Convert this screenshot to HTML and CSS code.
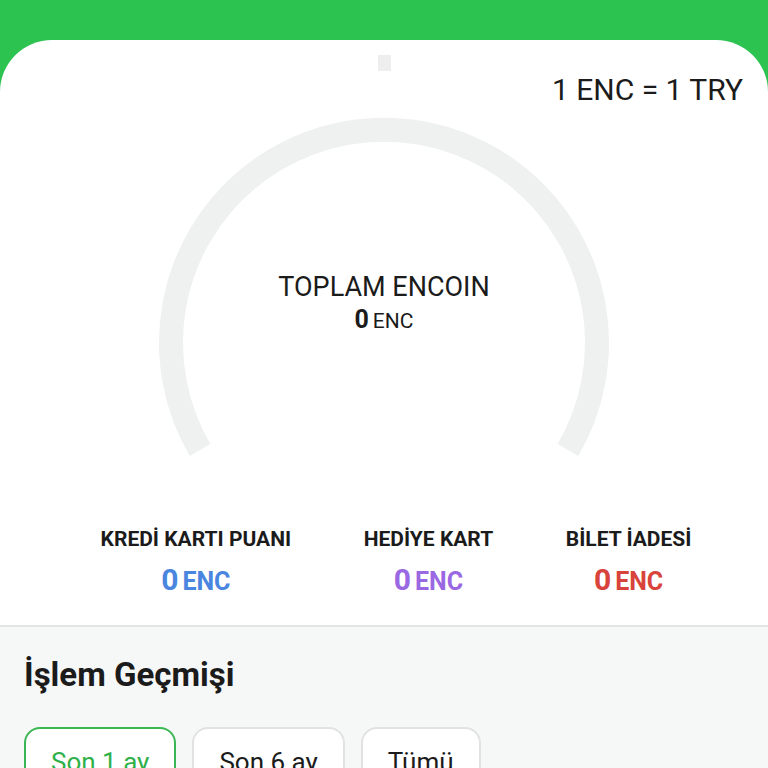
FILE: index.html
```html
<!DOCTYPE html>
<html lang="tr">
<head>
<meta charset="utf-8">
<link rel="stylesheet" href="styles.css">
</head>
<body>
<div class="page">
  <div class="card">
    <div class="handle"></div>
    <div class="rate">1 ENC = 1 TRY</div>
    <div class="gauge">
      <svg class="arc" width="460" height="360" viewBox="0 0 460 360">
        <path d="M 46 335 A 213 213 0 1 1 414 335" fill="none" stroke="#eff1f1" stroke-width="24" stroke-linecap="butt"/>
      </svg>
      <div class="total">
        <div class="total-label">TOPLAM ENCOIN</div>
        <div class="total-value"><span class="num">0</span> <span class="unit">ENC</span></div>
      </div>
    </div>
    <div class="stats">
      <div class="stat">
        <div class="stat-label">KREDİ KARTI PUANI</div>
        <div class="stat-value blue"><span class="num">0</span> <span class="unit">ENC</span></div>
      </div>
      <div class="stat">
        <div class="stat-label">HEDİYE KART</div>
        <div class="stat-value purple"><span class="num">0</span> <span class="unit">ENC</span></div>
      </div>
      <div class="stat">
        <div class="stat-label">BİLET İADESİ</div>
        <div class="stat-value red"><span class="num">0</span> <span class="unit">ENC</span></div>
      </div>
    </div>
  </div>
  <div class="history">
    <h2 class="history-title">İşlem Geçmişi</h2>
    <div class="tabs">
      <div class="tab active">Son 1 ay</div>
      <div class="tab">Son 6 ay</div>
      <div class="tab">Tümü</div>
    </div>
  </div>
</div>
</body>
</html>
```
FILE: styles.css
```css
html, body {
  margin: 0;
  padding: 0;
}
body {
  background: #2dc350;
  font-family: Roboto, "Noto Sans", Arial, sans-serif;
  color: #1b1b1b;
  overflow: hidden;
}
.page {
  padding-top: 40px;
}
.card {
  background: #ffffff;
  border-radius: 52px 52px 0 0;
  display: flex;
  flex-direction: column;
  align-items: center;
  padding-top: 15px;
}
.handle {
  width: 13px;
  height: 16px;
  background: #eeeeee;
}
.rate {
  align-self: flex-end;
  margin-right: 25px;
  margin-top: 1px;
  font-size: 30px;
  line-height: 36px;
  color: #1b1b1b;
}
.gauge {
  position: relative;
  width: 460px;
  height: 360px;
  margin-top: 7px;
}
.arc {
  display: block;
}
.total {
  position: absolute;
  left: 0;
  right: 0;
  top: 155px;
  text-align: center;
}
.total-label {
  font-size: 27px;
  line-height: 34px;
  color: #1b1b1b;
}
.total-value {
  line-height: 30px;
  margin-top: 1px;
}
.total-value .num {
  font-size: 25px;
  font-weight: 700;
}
.total-value .unit {
  font-size: 21px;
}
.stats {
  align-self: stretch;
  display: flex;
  justify-content: space-evenly;
  padding: 0 4px 0 28px;
  margin-top: 51px;
  height: 101px;
  border-bottom: 2px solid #e4e4e4;
  box-sizing: border-box;
}
.stat {
  display: flex;
  flex-direction: column;
  align-items: center;
}
.stat-label {
  font-size: 21px;
  font-weight: 700;
  line-height: 26px;
  color: #1b1b1b;
}
.stat-value {
  margin-top: 12px;
  font-weight: 700;
  line-height: 32px;
}
.stat-value .num {
  font-size: 30px;
}
.stat-value .unit {
  font-size: 25px;
}
.blue { color: #4a86e0; }
.purple { color: #9a68e2; }
.red { color: #d8433b; }
.history {
  background: #f6f7f7;
  padding: 25px 24px 0;
  height: 200px;
}
.history-title {
  margin: 0;
  font-size: 33px;
  line-height: 46px;
  font-weight: 700;
  color: #1b1b1b;
}
.tabs {
  display: flex;
  gap: 16px;
  margin-top: 29px;
}
.tab {
  background: #ffffff;
  border: 2px solid #e2e2e2;
  border-radius: 16px;
  padding: 14px 25px;
  font-size: 26px;
  line-height: 38px;
  color: #1b1b1b;
}
.tab.active {
  border-color: #3bb655;
  color: #2fb14a;
}
```
